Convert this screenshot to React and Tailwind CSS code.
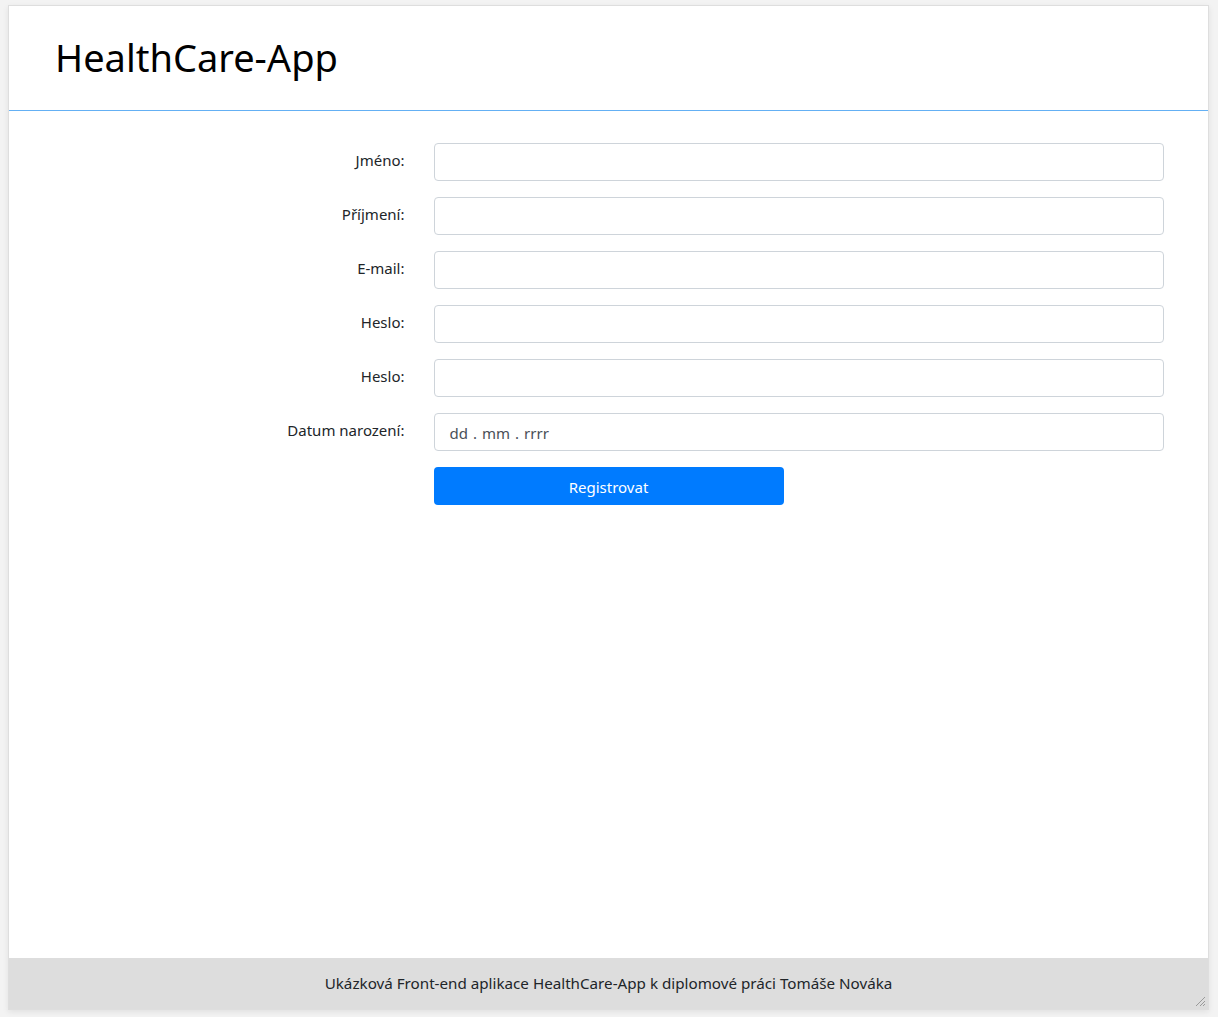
export default function App() {
  const fields = [
    { label: "Jméno:", type: "text" },
    { label: "Příjmení:", type: "text" },
    { label: "E-mail:", type: "email" },
    { label: "Heslo:", type: "password" },
    { label: "Heslo:", type: "password" },
  ];

  return (
    <div
      className="min-h-[1017px] bg-[#f3f3f3] pt-[5px] pb-[7px] pl-[8px] pr-[9px] text-[#212529]"
      style={{ fontFamily: '"Noto Sans", "Open Sans", sans-serif' }}
    >
      <div className="flex h-[1005px] flex-col border border-[#dedede] bg-white shadow-[0_2px_6px_rgba(0,0,0,0.08)]">
        {/* hlavička */}
        <header className="flex h-[105px] items-center border-b border-[#64b0f4] px-[46px]">
          <h1 className="-mt-[2px] text-[38px] leading-none font-normal text-black">HealthCare-App</h1>
        </header>

        {/* formulář */}
        <main className="flex-1">
          <form className="mx-auto mt-[32px] w-[1140px]" onSubmit={(e) => e.preventDefault()}>
            {fields.map((f, i) => (
              <div key={i} className="mb-[16px] grid grid-cols-[380px_760px]">
                <label className="px-[14px] pt-[5px] text-right text-[15px] leading-[24px]">{f.label}</label>
                <div className="px-[15px]">
                  <input
                    type={f.type}
                    className="h-[38px] w-full rounded-[4px] border border-[#ced4da] bg-white px-3 text-[16px] outline-none"
                  />
                </div>
              </div>
            ))}
            <div className="mb-[16px] grid grid-cols-[380px_760px]">
              <label className="px-[14px] pt-[5px] text-right text-[15px] leading-[24px]">Datum narození:</label>
              <div className="px-[15px]">
                <div className="flex h-[38px] w-full items-center rounded-[4px] border border-[#ced4da] bg-white px-[15px] pt-[2px] text-[15px] text-[#495057]">
                  dd<span className="mx-[5px]">.</span>mm<span className="mx-[5px]">.</span>rrrr
                </div>
              </div>
            </div>
            <div className="grid grid-cols-[380px_760px]">
              <div />
              <div className="px-[15px]">
                <button
                  type="submit"
                  className="h-[38px] w-[350px] rounded-[4px] bg-[#007bff] pt-[2px] text-[15px] text-white"
                >
                  Registrovat
                </button>
              </div>
            </div>
          </form>
        </main>

        {/* patička */}
        <footer className="relative flex h-[51px] items-center justify-center bg-[#dddddd] text-[15.2px]">
          Ukázková Front-end aplikace HealthCare-App k diplomové práci Tomáše Nováka
          <svg className="absolute right-[2px] bottom-[2px]" width="12" height="12" viewBox="0 0 12 12">
            <g stroke="#9a9a9a" strokeWidth="1">
              <line x1="11" y1="2" x2="2" y2="11" />
              <line x1="11" y1="6" x2="6" y2="11" />
              <line x1="11" y1="9" x2="9" y2="11" />
            </g>
          </svg>
        </footer>
      </div>
    </div>
  );
}
